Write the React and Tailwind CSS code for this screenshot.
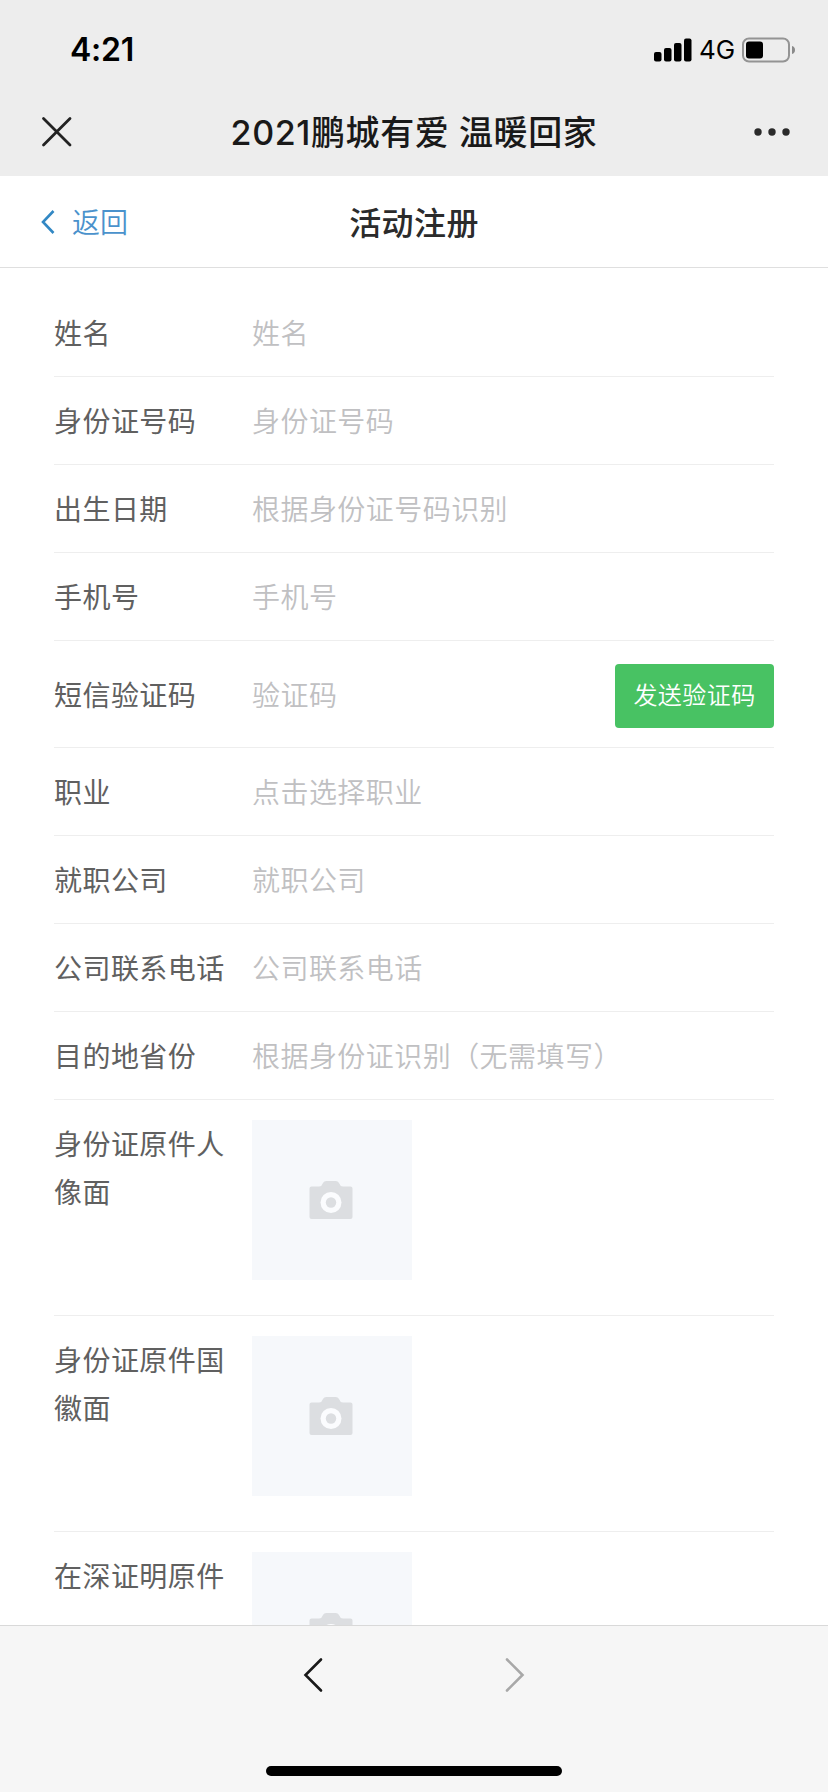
const fields = [
  { label: "姓名", placeholder: "姓名" },
  { label: "身份证号码", placeholder: "身份证号码" },
  { label: "出生日期", placeholder: "根据身份证号码识别" },
  { label: "手机号", placeholder: "手机号" },
  { label: "短信验证码", placeholder: "验证码", action: "发送验证码" },
  { label: "职业", placeholder: "点击选择职业" },
  { label: "就职公司", placeholder: "就职公司" },
  { label: "公司联系电话", placeholder: "公司联系电话" },
  { label: "目的地省份", placeholder: "根据身份证识别（无需填写）" },
];

const uploads = ["身份证原件人像面", "身份证原件国徽面", "在深证明原件"];

const CameraIcon = () => (
  <svg className="mr-[2px]" width="44" height="38" viewBox="0 0 44 38">
    <path
      fill="#dcdee1"
      d="M2.500 5.500H10c2 0 2.500-.8 3.200-2.200C14.300 1.200 15.500 0 17.500 0h9c2 0 3.200 1.200 4.300 3.300.7 1.400 1.200 2.200 3.200 2.200h7.500a2 2 0 0 1 2 2V36a2 2 0 0 1-2 2h-39a2 2 0 0 1-2-2V7.500a2 2 0 0 1 2-2z"
    />
    <circle cx="22" cy="21.500" r="10.500" fill="#fbfcfe" />
    <circle cx="22" cy="21.500" r="5.200" fill="#dcdee1" />
  </svg>
);

const StatusBar = () => (
  <div className="flex h-[88px] items-start justify-between pl-[70px] pr-[32px] pt-[37px] text-black">
    <span className="text-[32px] font-semibold leading-[26px] tracking-[-0.200px]">4:21</span>
    <div className="flex h-[25px] items-center">
      <svg width="38" height="24" viewBox="0 0 38 24">
        <rect x="0" y="14" width="7.500" height="9.500" rx="2" />
        <rect x="10" y="10" width="7.500" height="13.500" rx="2" />
        <rect x="20" y="5" width="7.500" height="18.500" rx="2" />
        <rect x="30" y="0.500" width="7.500" height="23" rx="2" />
      </svg>
      <span className="ml-[7px] w-[43px] text-[26px] leading-none">4G</span>
      <svg width="54" height="26" viewBox="0 0 54 26">
        <rect x="1" y="1.500" width="46" height="23" rx="6" fill="none" stroke="#949494" strokeWidth="2" />
        <rect x="4" y="4.500" width="17" height="17" rx="3" />
        <path d="M50 9c2 .5 3 2 3 4s-1 3.500-3 4z" fill="#8a8a8a" />
      </svg>
    </div>
  </div>
);

const TitleBar = () => (
  <div className="flex h-[88px] items-center justify-between px-[37px] text-[#191919]">
    <svg width="38" height="38" viewBox="0 0 38 38" stroke="#222" strokeWidth="2.800" strokeLinecap="round">
      <path d="M6.500 5.500 33 32M33 5.500 6.500 32" />
    </svg>
    <h1 className="whitespace-nowrap pt-[2px] text-[34px] font-medium leading-none tracking-[0.600px]">
      2021鹏城有爱 温暖回家
    </h1>
    <svg width="38" height="38" viewBox="0 0 38 38" fill="#2a2a2a">
      <circle cx="5" cy="19" r="3.700" />
      <circle cx="19" cy="19" r="3.700" />
      <circle cx="33" cy="19" r="3.700" />
    </svg>
  </div>
);

const PageHeader = () => (
  <div className="grid h-[92px] shrink-0 grid-cols-3 items-center border-b border-[#dfdfdf] bg-white">
    <div className="flex items-center pl-[40px] text-[#4a92cc]">
      <svg width="16" height="26" viewBox="0 0 16 26" fill="none" stroke="#3288c4" strokeWidth="2.600">
        <path d="M13.500 2 3 13l10.500 11" />
      </svg>
      <span className="ml-[16px] pt-[2px] text-[28px] font-[350] leading-none">返回</span>
    </div>
    <h2 className="pt-[4px] text-center text-[32px] font-medium leading-none tracking-[0.400px] text-[#2b2b2b]">
      活动注册
    </h2>
  </div>
);

const FormRow = ({ label, placeholder, action }) => (
  <div
    className={`flex items-center border-b border-[#eeeeee] pt-[3px] ${action ? "h-[107px]" : "h-[88px]"}`}
  >
    <span className="w-[198px] shrink-0 text-[#606060]">{label}</span>
    <span className="flex-1 font-[350] text-[#c0c0c2]">{placeholder}</span>
    {action && (
      <button className="h-[64px] w-[159px] rounded bg-[#48c263] text-[24px] font-[350] leading-none text-white">
        {action}
      </button>
    )}
  </div>
);

const UploadRow = ({ label }) => (
  <div className="flex h-[216px] items-start border-b border-[#eeeeee] pt-[20px]">
    <span className="w-[198px] shrink-0 pr-[20px] pt-px leading-[48px] text-[#606060]">{label}</span>
    <div className="flex size-[160px] items-center justify-center bg-[#f6f8fb]">
      <CameraIcon />
    </div>
  </div>
);

const BottomNav = () => (
  <div className="flex h-[167px] shrink-0 flex-col items-center justify-between border-t border-[#d9d9d9] bg-[#f6f6f6] pb-[16px] pt-[31px]">
    <div className="flex w-[222px] justify-between">
      <svg width="20" height="36" viewBox="0 0 20 36" fill="none" stroke="#191919" strokeWidth="2.600" strokeLinecap="round">
        <path d="M18 2.500 2.500 18 18 33.500" />
      </svg>
      <svg width="20" height="36" viewBox="0 0 20 36" fill="none" stroke="#a8a8a8" strokeWidth="2.600" strokeLinecap="round">
        <path d="M2 2.500 17.500 18 2 33.500" />
      </svg>
    </div>
    <div className="h-[10px] w-[296px] rounded-full bg-black" />
  </div>
);

const App = () => {
  return (
    <div className="flex h-[1792px] w-[828px] flex-col overflow-hidden bg-white font-['Inter','Noto_Sans_CJK_SC',sans-serif]">
      <header className="h-[176px] shrink-0 bg-[#ededed]">
        <StatusBar />
        <TitleBar />
      </header>

      <PageHeader />

      {/* Registration form */}
      <main className="min-h-0 flex-1 overflow-hidden px-[54px] pt-[21px] text-[28px] leading-[48px] tracking-[0.450px]">
        {fields.map((field) => (
          <FormRow key={field.label} {...field} />
        ))}
        {uploads.map((label) => (
          <UploadRow key={label} label={label} />
        ))}
      </main>

      <BottomNav />
    </div>
  );
};

export default App;
